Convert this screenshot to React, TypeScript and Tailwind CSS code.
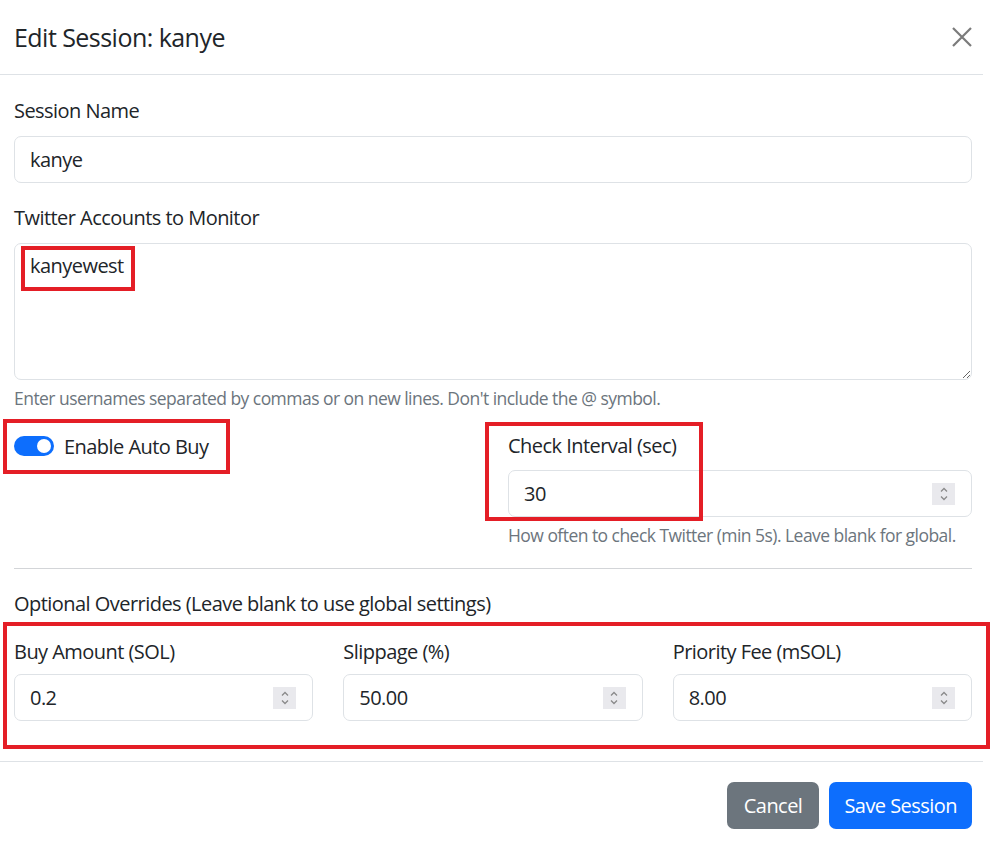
import React from 'react';

const Spinner = () => (
  <div className="flex h-[22px] w-[23px] flex-col items-center justify-center bg-[#e9e9ed]">
    <svg width="10" height="16" viewBox="0 0 10 16" fill="none" stroke="#8a8a8a" strokeWidth="1.3">
      <path d="M2 5.5 L5 2.5 L8 5.5" />
      <path d="M2 10.5 L5 13.5 L8 10.5" />
    </svg>
  </div>
);

const NumberField = ({ value }: { value: string }) => (
  <div className="flex h-[47px] items-center rounded-[7px] border border-[#dee2e6] bg-white pl-[15px] pr-[16px]">
    <input
      type="text"
      defaultValue={value}
      className="min-w-0 flex-1 bg-transparent text-[20px] tracking-[-0.027em] text-[#212529] outline-none"
    />
    <Spinner />
  </div>
);

const RedBox = ({ className }: { className: string }) => (
  <div className={`pointer-events-none absolute border-[4px] border-[#e41e26] ${className}`} />
);

export default function App() {
  return (
    <div className="relative min-h-[843px] w-[990px] bg-white font-['Segoe_UI','Open_Sans','Noto_Sans',sans-serif] text-[20px] leading-[30px] tracking-[-0.027em] text-[#212529]">
      <div className="w-[983px]">
        {/* header */}
        <div className="flex h-[75px] items-center justify-between border-b border-[#dee2e6] pl-[14px] pr-[11px]">
          <h5 className="text-[25px] leading-[30px]">Edit Session: kanye</h5>
          <button className="flex h-[30px] w-[30px] items-center justify-end">
            <svg width="20" height="20" viewBox="0 0 20 20" stroke="#7b7b7b" strokeWidth="2.2">
              <path d="M1 1 L19 19 M19 1 L1 19" />
            </svg>
          </button>
        </div>

        {/* body */}
        <div className="pb-[40px] pl-[14px] pr-[11px] pt-[21px]">
          <div className="mb-[20px]">
            <label className="mb-[10px] block">Session Name</label>
            <input
              type="text"
              defaultValue="kanye"
              className="block h-[47px] w-full rounded-[7px] border border-[#dee2e6] px-[15px] outline-none"
            />
          </div>

          <div className="mb-[20px]">
            <label className="mb-[10px] block">Twitter Accounts to Monitor</label>
            <textarea
              rows={4}
              defaultValue="kanyewest"
              className="block h-[137px] w-full rounded-[7px] border border-[#dee2e6] px-[15px] py-[7px] outline-none"
            />
            <div className="mt-[5px] text-[17.5px] leading-[26px] text-[#6c757d]">
              Enter usernames separated by commas or on new lines. Don't include the @ symbol.
            </div>
          </div>

          <div className="grid grid-cols-2 gap-x-[30px]">
            <div className="flex items-start pt-[1px]">
              <div className="mt-[4px] flex h-[20px] w-[40px] items-center justify-end rounded-full bg-[#0d6efd] px-[3px]">
                <div className="h-[14px] w-[14px] rounded-full bg-white" />
              </div>
              <span className="ml-[10px]">Enable Auto Buy</span>
            </div>
            <div>
              <label className="mb-[9px] block">Check Interval (sec)</label>
              <NumberField value="30" />
              <div className="mt-[5px] text-[17.5px] leading-[26px] text-[#6c757d]">
                How often to check Twitter (min 5s). Leave blank for global.
              </div>
            </div>
          </div>

          <hr className="my-[20px] border-t border-[#d3d5d8]" />

          <div className="mb-[18px]">Optional Overrides (Leave blank to use global settings)</div>

          <div className="grid grid-cols-3 gap-x-[30px]">
            <div>
              <label className="mb-[7px] block">Buy Amount (SOL)</label>
              <NumberField value="0.2" />
            </div>
            <div>
              <label className="mb-[7px] block">Slippage (%)</label>
              <NumberField value="50.00" />
            </div>
            <div>
              <label className="mb-[7px] block">Priority Fee (mSOL)</label>
              <NumberField value="8.00" />
            </div>
          </div>
        </div>

        {/* footer */}
        <div className="flex justify-end gap-[10px] border-t border-[#dee2e6] pb-[15px] pl-[14px] pr-[11px] pt-[20px]">
          <button className="h-[47px] rounded-[7px] bg-[#6c757d] px-[17px] text-white">Cancel</button>
          <button className="h-[47px] rounded-[7px] bg-[#0d6efd] px-[15px] text-white">Save Session</button>
        </div>
      </div>

      <RedBox className="left-[21px] top-[246px] h-[45px] w-[114px]" />
      <RedBox className="left-[3px] top-[419px] h-[55px] w-[227px]" />
      <RedBox className="left-[485px] top-[422px] h-[99px] w-[218px]" />
      <RedBox className="left-[3px] top-[622px] h-[127px] w-[987px]" />
    </div>
  );
}
